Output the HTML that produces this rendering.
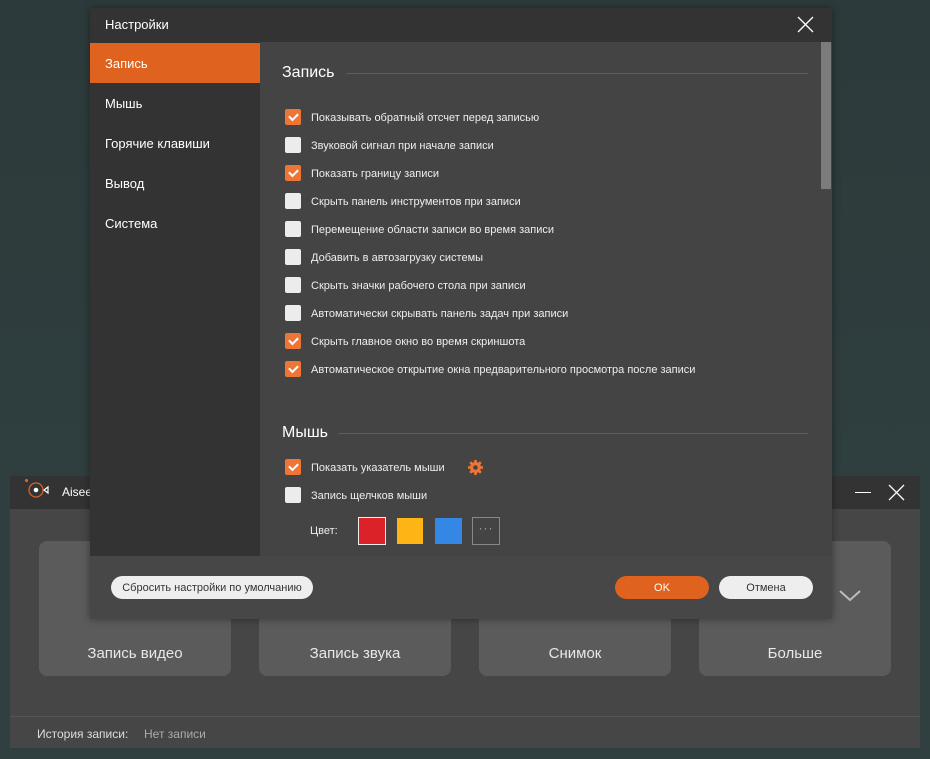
<!DOCTYPE html>
<html><head><meta charset="utf-8"><style>
*{margin:0;padding:0;box-sizing:border-box}
body{width:930px;height:759px;overflow:hidden;background:linear-gradient(180deg,#2d3a3b,#304040);font-family:"Liberation Sans","DejaVu Sans",sans-serif;position:relative;color:#fff}
.abs{position:absolute}
.app{left:10px;top:476px;width:910px;height:272px;background:#464646}
.apptb{left:10px;top:476px;width:910px;height:33px;background:#333}
.tile{top:541px;width:192px;height:135px;background:#5b5b5b;border-radius:8px;color:#e8e8e8;font-size:15px;text-align:center;padding-top:104px}
.dlg{left:90px;top:8px;width:742px;height:611px;background:#474747;box-shadow:0 0 8px rgba(0,0,0,.4)}
.tb{left:90px;top:8px;width:742px;height:34px;background:#333;font-size:13px;color:#fff;padding:9px 0 0 15px}
.side{left:90px;top:42px;width:170px;height:514px;background:#333}
.si{position:absolute;left:0;width:170px;height:40px;font-size:13px;color:#fff;padding:13px 0 0 15px}
.cont{left:260px;top:42px;width:572px;height:514px;background:#444}
.h{font-size:16px;color:#fff}
.hl{height:1px;background:#5c5c5c}
.row{position:absolute;left:285px;font-size:11px;color:#eee;height:16px;line-height:16px}
.cb{position:absolute;left:0;top:0;width:16px;height:16px;border-radius:2px;background:#ececec}
.cb.on{background:#ee7534}
.cb.on:after{content:"";position:absolute;left:4px;width:7px;height:4px;border-left:2px solid #fff;border-bottom:2px solid #fff;transform:rotate(-45deg);transform-origin:center;top:4px}
.row span{position:absolute;left:26px;top:1px;white-space:nowrap}
.btn{top:576px;height:23px;border-radius:12px;font-size:11px;text-align:center;line-height:25px}
</style></head><body>
<div class="abs app"></div>
<div class="abs apptb"></div>
<svg class="abs" style="left:24px;top:478px" width="30" height="26" viewBox="0 0 30 26"><circle cx="2.5" cy="2.5" r="1.5" fill="#e06a2b"/><circle cx="12" cy="12" r="7" fill="none" stroke="#d7642a" stroke-width="1.3"/><circle cx="12" cy="12" r="2.3" fill="#fff"/><path d="M20 12 L24 9 V15 Z" fill="none" stroke="#fff" stroke-width="1.2"/></svg>
<div class="abs" style="left:62px;top:485px;font-size:12px;color:#fff">Aisees</div>
<div class="abs" style="left:855px;top:492px;width:16px;height:1px;background:#fff"></div>
<svg class="abs" style="left:888px;top:484px" width="17" height="17"><path d="M1 1L16 16M16 1L1 16" stroke="#fff" stroke-width="1.3"/></svg>
<div class="abs tile" style="left:39px">Запись видео</div>
<div class="abs tile" style="left:259px">Запись звука</div>
<div class="abs tile" style="left:479px">Снимок</div>
<div class="abs tile" style="left:699px">Больше</div>
<svg class="abs" style="left:838px;top:588px" width="24" height="16"><path d="M2 3L12 12L22 3" fill="none" stroke="#bbb" stroke-width="2"/></svg>
<div class="abs" style="left:10px;top:716px;width:910px;height:1px;background:#555"></div>
<div class="abs" style="left:37px;top:727px;font-size:12px;color:#ddd">История записи:</div>
<div class="abs" style="left:144px;top:727px;font-size:12px;color:#aaa">Нет записи</div>

<div class="abs dlg"></div>
<div class="abs tb">Настройки</div>
<svg class="abs" style="left:797px;top:16px" width="17" height="17"><path d="M1 1L16 16M16 1L1 16" stroke="#fff" stroke-width="1.3"/></svg>
<div class="abs side">
<div class="si" style="top:1px;background:#e0621f">Запись</div>
<div class="si" style="top:41px">Мышь</div>
<div class="si" style="top:81px">Горячие клавиши</div>
<div class="si" style="top:121px">Вывод</div>
<div class="si" style="top:161px">Система</div>
</div>
<div class="abs cont"></div>
<div class="abs" style="left:821px;top:42px;width:10px;height:147px;background:#7c7c7c"></div>
<div class="abs h" style="left:282px;top:64px">Запись</div>
<div class="abs hl" style="left:346px;top:73px;width:462px"></div>
<div class="row" style="top:109px"><i class="cb on"></i><span>Показывать обратный отсчет перед записью</span></div>
<div class="row" style="top:137px"><i class="cb"></i><span>Звуковой сигнал при начале записи</span></div>
<div class="row" style="top:165px"><i class="cb on"></i><span>Показать границу записи</span></div>
<div class="row" style="top:193px"><i class="cb"></i><span>Скрыть панель инструментов при записи</span></div>
<div class="row" style="top:221px"><i class="cb"></i><span>Перемещение области записи во время записи</span></div>
<div class="row" style="top:249px"><i class="cb"></i><span>Добавить в автозагрузку системы</span></div>
<div class="row" style="top:277px"><i class="cb"></i><span>Скрыть значки рабочего стола при записи</span></div>
<div class="row" style="top:305px"><i class="cb"></i><span>Автоматически скрывать панель задач при записи</span></div>
<div class="row" style="top:333px"><i class="cb on"></i><span>Скрыть главное окно во время скриншота</span></div>
<div class="row" style="top:361px"><i class="cb on"></i><span>Автоматическое открытие окна предварительного просмотра после записи</span></div>
<div class="abs h" style="left:282px;top:424px">Мышь</div>
<div class="abs hl" style="left:338px;top:433px;width:470px"></div>
<div class="row" style="top:459px"><i class="cb on"></i><span>Показать указатель мыши</span></div>
<svg class="abs" style="left:467px;top:459px" width="17" height="17" viewBox="0 0 17 17"><g fill="#ee7534"><circle cx="8.5" cy="8.5" r="5.5"/><g stroke="#ee7534" stroke-width="2.6"><path d="M8.5 1V16M1 8.5H16M3.2 3.2L13.8 13.8M13.8 3.2L3.2 13.8"/></g></g><circle cx="8.5" cy="8.5" r="2.3" fill="#444"/></svg>
<div class="row" style="top:487px"><i class="cb"></i><span>Запись щелчков мыши</span></div>
<div class="abs" style="left:310px;top:525px;font-size:11px;color:#eee">Цвет:</div>
<div class="abs" style="left:358px;top:517px;width:28px;height:28px;background:#dc2229;border:1px solid #eee"></div>
<div class="abs" style="left:397px;top:518px;width:26px;height:26px;background:#fdb515"></div>
<div class="abs" style="left:435px;top:518px;width:27px;height:26px;background:#3587e6"></div>
<div class="abs" style="left:472px;top:517px;width:28px;height:28px;border:1px solid #888;color:#aaa;font-size:12px;text-align:center;line-height:20px;letter-spacing:1px">···</div>
<div class="abs btn" style="left:111px;width:202px;background:#eee;color:#333">Сбросить настройки по умолчанию</div>
<div class="abs btn" style="left:615px;width:94px;background:#e0621f;color:#fff">OK</div>
<div class="abs btn" style="left:719px;width:94px;background:#eee;color:#333">Отмена</div>
</body></html>
